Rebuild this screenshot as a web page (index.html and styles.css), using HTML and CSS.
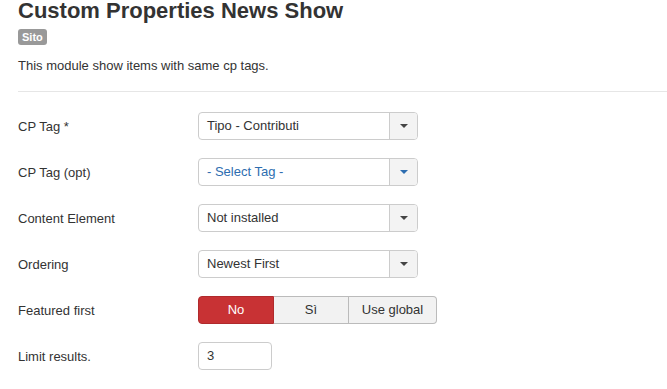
FILE: index.html
```
<!DOCTYPE html>
<html lang="it">
<head>
<meta charset="utf-8">
<title>Custom Properties News Show</title>
<link rel="stylesheet" href="styles.css">
</head>
<body>
<div class="page">
  <h1 class="title">Custom Properties News Show</h1>
  <span class="badge">Sito</span>
  <p class="desc">This module show items with same cp tags.</p>
  <hr class="rule">
  <div class="form">
    <div class="row">
      <label class="label">CP Tag *</label>
      <div class="select"><span class="value">Tipo - Contributi</span><span class="arrow"><span class="caret"></span></span></div>
    </div>
    <div class="row">
      <label class="label">CP Tag (opt)</label>
      <div class="select select-empty"><span class="value">- Select Tag -</span><span class="arrow"><span class="caret"></span></span></div>
    </div>
    <div class="row">
      <label class="label">Content Element</label>
      <div class="select"><span class="value">Not installed</span><span class="arrow"><span class="caret"></span></span></div>
    </div>
    <div class="row">
      <label class="label">Ordering</label>
      <div class="select"><span class="value">Newest First</span><span class="arrow"><span class="caret"></span></span></div>
    </div>
    <div class="row">
      <label class="label">Featured first</label>
      <div class="btn-group">
        <span class="btn btn-active">No</span>
        <span class="btn">Sì</span>
        <span class="btn btn-last">Use global</span>
      </div>
    </div>
    <div class="row">
      <label class="label">Limit results.</label>
      <div class="input">3</div>
    </div>
  </div>
</div>
</body>
</html>
```
FILE: styles.css
```
* { box-sizing: border-box; }
html, body {
  margin: 0;
  padding: 0;
  background: #fff;
}
body {
  font-family: "Liberation Sans", Arial, Helvetica, sans-serif;
  color: #333;
  font-size: 13px;
}
.page {
  padding-left: 18px;
}
.title {
  margin: 0;
  font-size: 22px;
  line-height: 22px;
  font-weight: bold;
  color: #333;
}
.badge {
  display: inline-block;
  margin-top: 7px;
  background: #999;
  color: #fff;
  font-weight: bold;
  font-size: 11px;
  line-height: 14px;
  padding: 1px 4px;
  border-radius: 3px;
  vertical-align: top;
}
.desc {
  margin: 12px 0 0;
  font-size: 13px;
  line-height: 18px;
}
.rule {
  margin: 16px 0 0;
  border: 0;
  border-top: 1px solid #e6e6e6;
  height: 0;
}
.form {
  padding-top: 20px;
  display: flex;
  flex-direction: column;
  gap: 18px;
}
.row {
  display: flex;
  align-items: center;
  height: 28px;
}
.label {
  width: 180px;
  flex: none;
  font-size: 13px;
  color: #333;
}
.select {
  width: 220px;
  height: 28px;
  border: 1px solid #ccc;
  border-radius: 4px;
  display: flex;
  background: #fff;
  overflow: hidden;
}
.value {
  flex: 1;
  padding-left: 8px;
  line-height: 26px;
  font-size: 13px;
  color: #333;
}
.select-empty .value { color: #2d6db0; }
.arrow {
  width: 28px;
  flex: none;
  border-left: 1px solid #ccc;
  background: #f3f3f3;
  display: flex;
  align-items: center;
  justify-content: center;
}
.caret {
  width: 0;
  height: 0;
  border-left: 4px solid transparent;
  border-right: 4px solid transparent;
  border-top: 4px solid #444;
}
.select-empty .caret { border-top-color: #2d6db0; }
.btn-group {
  display: flex;
  height: 28px;
}
.btn {
  height: 28px;
  line-height: 26px;
  text-align: center;
  font-size: 13px;
  color: #333;
  background: #f2f2f2;
  border: 1px solid #bbb;
  border-left: 0;
  width: 75px;
}
.btn-active {
  width: 76px;
  background: #c83234;
  border: 1px solid #b02a2c;
  color: #fff;
  border-radius: 4px 0 0 4px;
}
.btn-last {
  width: 88px;
  border-radius: 0 4px 4px 0;
}
.input {
  width: 74px;
  height: 28px;
  border: 1px solid #ccc;
  border-radius: 4px;
  padding-left: 8px;
  line-height: 26px;
  font-size: 13px;
  color: #333;
}
```
